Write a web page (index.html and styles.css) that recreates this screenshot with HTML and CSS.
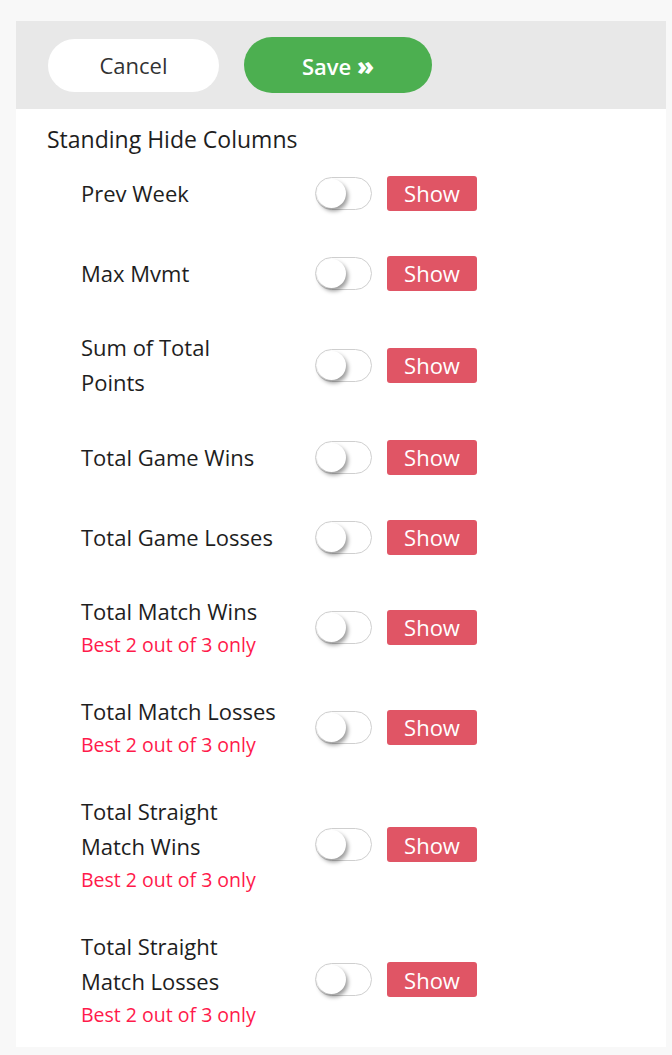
FILE: index.html
```html
<!DOCTYPE html>
<html lang="en">
<head>
  <meta charset="UTF-8" />
  <title>Standing Hide Columns</title>
  <link rel="stylesheet" href="styles.css">
</head>
<body>
  <div class="panel">
    <div class="panel-header">
      <button class="btn btn-cancel">Cancel</button>
      <button class="btn btn-save">Save <span class="chev">&raquo;</span></button>
    </div>

    <div class="section-title">Standing Hide Columns</div>

    <div class="col-list">
      <div class="col-row">
        <div class="col-label">Prev Week</div>
        <label class="switch"><input type="checkbox"><span class="knob"></span></label>
        <button class="show-btn">Show</button>
      </div>
      <div class="col-row">
        <div class="col-label">Max Mvmt</div>
        <label class="switch"><input type="checkbox"><span class="knob"></span></label>
        <button class="show-btn">Show</button>
      </div>
      <div class="col-row">
        <div class="col-label">Sum of Total Points</div>
        <label class="switch"><input type="checkbox"><span class="knob"></span></label>
        <button class="show-btn">Show</button>
      </div>
      <div class="col-row">
        <div class="col-label">Total Game Wins</div>
        <label class="switch"><input type="checkbox"><span class="knob"></span></label>
        <button class="show-btn">Show</button>
      </div>
      <div class="col-row">
        <div class="col-label">Total Game Losses</div>
        <label class="switch"><input type="checkbox"><span class="knob"></span></label>
        <button class="show-btn">Show</button>
      </div>
      <div class="col-row">
        <div class="col-label">Total Match Wins
          <div class="col-note">Best 2 out of 3 only</div>
        </div>
        <label class="switch"><input type="checkbox"><span class="knob"></span></label>
        <button class="show-btn">Show</button>
      </div>
      <div class="col-row">
        <div class="col-label">Total Match Losses
          <div class="col-note">Best 2 out of 3 only</div>
        </div>
        <label class="switch"><input type="checkbox"><span class="knob"></span></label>
        <button class="show-btn">Show</button>
      </div>
      <div class="col-row">
        <div class="col-label">Total Straight Match Wins
          <div class="col-note">Best 2 out of 3 only</div>
        </div>
        <label class="switch"><input type="checkbox"><span class="knob"></span></label>
        <button class="show-btn">Show</button>
      </div>
      <div class="col-row">
        <div class="col-label">Total Straight Match Losses
          <div class="col-note">Best 2 out of 3 only</div>
        </div>
        <label class="switch"><input type="checkbox"><span class="knob"></span></label>
        <button class="show-btn">Show</button>
      </div>
    </div>
  </div>
</body>
</html>
```

FILE: styles.css
```css
/* Base */
* {
  box-sizing: border-box;
  margin: 0;
  padding: 0;
}

body {
  background-color: #f8f8f8;
  font-family: 'Open Sans', 'Noto Sans', sans-serif;
  color: #1e1e1e;
}

.panel {
  width: 650px;
  margin: 21px 0 0 16px;
  background-color: #fff;
}

/* Header with buttons */
.panel-header {
  display: flex;
  align-items: center;
  gap: 25px;
  height: 88px;
  padding-left: 32px;
  background-color: #e8e8e8;
}

.btn {
  border: none;
  border-radius: 28px;
  font-family: inherit;
  font-size: 22px;
  cursor: pointer;
}

.btn-cancel {
  width: 171px;
  height: 53px;
  background-color: #fff;
  color: #333;
}

.btn-save {
  width: 188px;
  height: 56px;
  background-color: #4caf50;
  color: #fff;
  font-weight: 600;
}

.btn-save .chev {
  font-weight: 800;
  font-size: 25px;
}

.section-title {
  padding: 16px 0 0 31px;
  font-size: 23px;
  line-height: 28px;
}

/* Column rows */
.col-row {
  display: flex;
  align-items: center;
  min-height: 80px;
  padding: 17px 0 17px 65px;
}

.col-label {
  width: 197px;
  margin-right: 37px;
  font-size: 22px;
  line-height: 35px;
}

.col-note {
  font-size: 19.5px;
  line-height: 31px;
  color: #ff1a4b;
}

/* Toggle switch */
.switch {
  position: relative;
  display: inline-block;
  width: 57px;
  height: 33px;
  border: 1px solid #cfcfcf;
  border-radius: 17px;
  background-color: #fff;
}

.switch input {
  display: none;
}

.knob {
  position: absolute;
  top: 1px;
  left: 1px;
  width: 29px;
  height: 29px;
  border-radius: 50%;
  background-color: #fff;
  box-shadow: 2px 3px 4px rgba(0, 0, 0, 0.4);
}

.show-btn {
  width: 90px;
  height: 35px;
  margin-left: 15px;
  border: none;
  border-radius: 3px;
  background-color: #e05565;
  color: #fff;
  font-family: inherit;
  font-size: 22px;
}
```
